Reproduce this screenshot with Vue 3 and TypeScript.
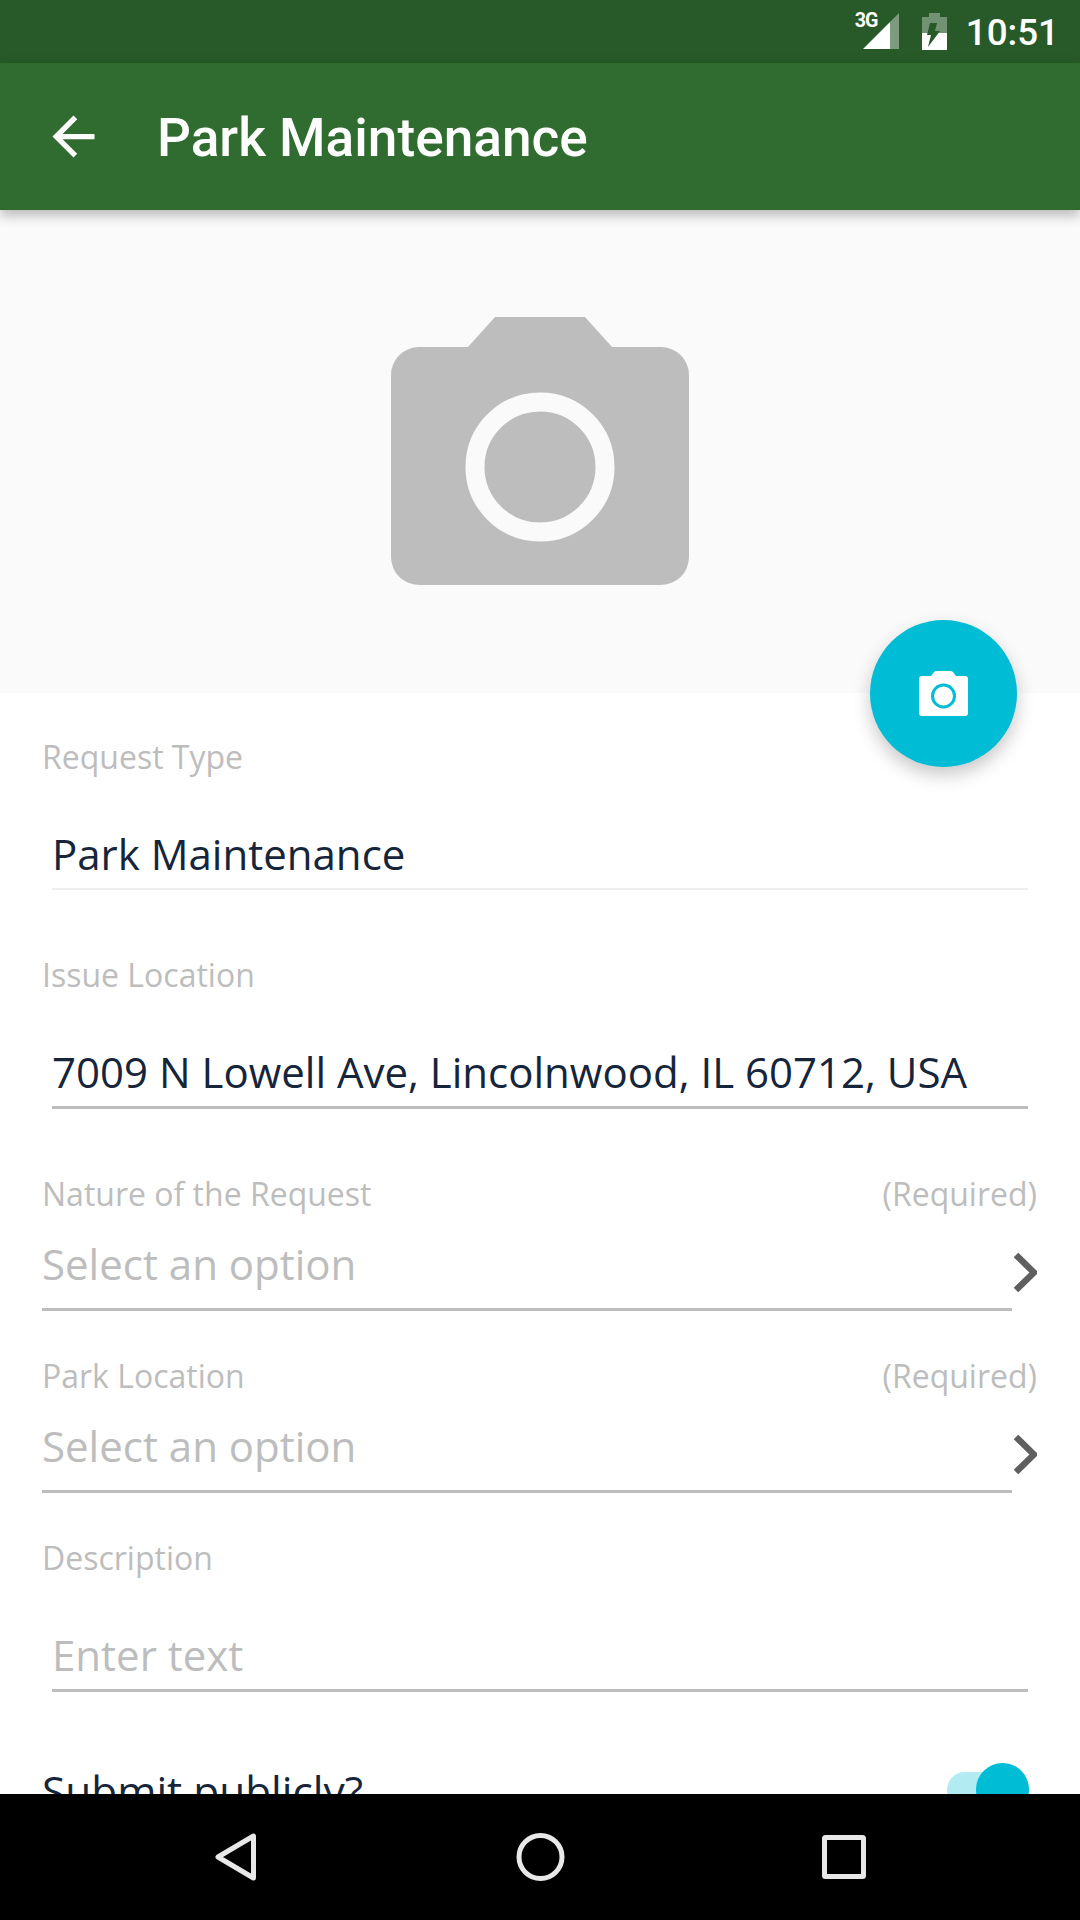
<script setup lang="ts">
interface Field {
  label: string
  value?: string
  placeholder?: string
  required?: boolean
  kind: 'readonly' | 'input' | 'select'
}

const fields: Field[] = [
  { label: 'Request Type', value: 'Park Maintenance', kind: 'readonly' },
  { label: 'Issue Location', value: '7009 N Lowell Ave, Lincolnwood, IL 60712, USA', kind: 'input' },
  { label: 'Nature of the Request', placeholder: 'Select an option', required: true, kind: 'select' },
  { label: 'Park Location', placeholder: 'Select an option', required: true, kind: 'select' },
  { label: 'Description', placeholder: 'Enter text', kind: 'input' }
]
</script>

<template>
  <div class="screen">
    <!-- Status bar -->
    <div class="status-bar">
      <div class="signal">
        <span class="network">3G</span>
        <svg width="36" height="36" viewBox="0 0 36 36">
          <path d="M36 0V36H27V9z" fill="#fff" opacity="0.4" />
          <path d="M27 9V36H0z" fill="#fff" />
        </svg>
      </div>
      <svg class="battery" width="25" height="37" viewBox="0 0 25 37">
        <path fill-rule="evenodd" d="M0 4H7V0H18V4H25V20H0zM8 10H15L13 18H18L16.5 20H5.5z" fill="#fff" opacity="0.35" />
        <path fill-rule="evenodd" d="M0 20H25V37H0zM5.5 20H16.5L6 34L9 22H5z" fill="#fff" />
      </svg>
      <span class="clock">10:51</span>
    </div>

    <!-- Toolbar -->
    <header class="toolbar">
      <svg class="back" width="63" height="63" viewBox="0 0 24 24">
        <path d="M20 11H7.83l5.59-5.59L12 4l-8 8 8 8 1.41-1.41L7.83 13H20z" fill="#fff" />
      </svg>
      <h1 class="title">Park Maintenance</h1>
    </header>

    <main class="content">
      <!-- Photo placeholder -->
      <section class="hero">
        <svg width="298" height="268" viewBox="0 0 298 268">
          <path
            fill="#bdbdbd"
            d="M77 30L104 0H194L221 30H270A28 28 0 0 1 298 58V240A28 28 0 0 1 270 268H28A28 28 0 0 1 0 240V58A28 28 0 0 1 28 30z"
          />
          <circle cx="149" cy="150" r="65" fill="none" stroke="#fafafa" stroke-width="19" />
        </svg>
        <button class="fab" type="button" aria-label="Add photo">
          <svg width="49" height="45" viewBox="0 0 49 45">
            <path
              fill="#fff"
              d="M12 5L15 1Q16 0 18 0H31Q33 0 34 1L37 5H46Q49 5 49 8V42Q49 45 46 45H3Q0 45 0 42V8Q0 5 3 5z"
            />
            <circle cx="24.5" cy="25" r="11" fill="none" stroke="#00bcd4" stroke-width="3" />
          </svg>
        </button>
      </section>

      <!-- Form -->
      <form class="form">
        <div v-for="field in fields" :key="field.label" class="field" :class="'field-' + field.kind">
          <div class="label-row">
            <span>{{ field.label }}</span>
            <span v-if="field.required">(Required)</span>
          </div>
          <div class="control">
            <div class="value" :class="{ placeholder: !field.value }">
              {{ field.value || field.placeholder }}
            </div>
            <svg v-if="field.kind === 'select'" class="chevron" width="24" height="39" viewBox="0 0 24 39">
              <path d="M3 2L21 19.5L3 37" fill="none" stroke="#5f5f5f" stroke-width="6.5" />
            </svg>
          </div>
        </div>

        <div class="toggle-row">
          <span>Submit publicly?</span>
          <span class="toggle"><span class="thumb"></span></span>
        </div>
      </form>
    </main>

    <!-- Navigation bar -->
    <nav class="nav-bar">
      <svg width="42" height="48" viewBox="0 0 42 48">
        <path d="M38.5 3V45L3 24z" fill="none" stroke="#e8e8e8" stroke-width="5" stroke-linejoin="round" />
      </svg>
      <svg width="49" height="48" viewBox="0 0 49 48">
        <circle cx="24.5" cy="24" r="21.5" fill="none" stroke="#e8e8e8" stroke-width="5" />
      </svg>
      <svg width="44" height="44" viewBox="0 0 44 44">
        <rect x="2.5" y="2.5" width="39" height="39" rx="1" fill="none" stroke="#e8e8e8" stroke-width="5" />
      </svg>
    </nav>
  </div>
</template>

<style scoped>
.screen {
  width: 1080px;
  height: 1920px;
  display: flex;
  flex-direction: column;
  overflow: hidden;
  background: #fff;
  font-family: "Open Sans", "Noto Sans", sans-serif;
}

.status-bar {
  height: 63px;
  flex: none;
  display: flex;
  align-items: center;
  padding-right: 21px;
  box-sizing: border-box;
  background: #275a28;
  color: #fff;
  font-family: Roboto, sans-serif;
}

.signal {
  position: relative;
  margin-left: auto;
  margin-top: -2px;
  height: 36px;
}

.network {
  position: absolute;
  left: -8px;
  top: -1px;
  font-size: 19.7px;
  line-height: 18px;
  font-weight: 700;
  letter-spacing: -1px;
}

.battery {
  margin-left: 23px;
  margin-top: -1px;
}

.clock {
  margin-left: 19px;
  margin-top: 2px;
  font-size: 36.75px;
  font-weight: 500;
}

.toolbar {
  position: relative;
  z-index: 2;
  height: 147px;
  flex: none;
  display: flex;
  align-items: center;
  padding-left: 42px;
  background: #306b30;
  box-shadow: 0 5px 12px rgba(0, 0, 0, 0.28);
}

.title {
  margin: 3px 0 0 52px;
  color: #fff;
  font-family: Roboto, sans-serif;
  font-size: 53.2px;
  font-weight: 500;
}

.content {
  flex: 1;
  min-height: 0;
  overflow: hidden;
}

.hero {
  position: relative;
  height: 483px;
  box-sizing: border-box;
  padding-top: 107px;
  display: flex;
  justify-content: center;
  align-items: flex-start;
  background: #fafafa;
}

.fab {
  position: absolute;
  right: 63px;
  bottom: -74px;
  width: 147px;
  height: 147px;
  padding: 0;
  border: 0;
  border-radius: 50%;
  display: flex;
  align-items: center;
  justify-content: center;
  background: #00bcd4;
  box-shadow: 0 8px 18px rgba(0, 0, 0, 0.22);
}

.form {
  padding: 42px 43px 0 42px;
}

.label-row {
  display: flex;
  justify-content: space-between;
  color: #bdbdbd;
  font-size: 32px;
  line-height: 44px;
}

.control {
  position: relative;
  border-bottom: 3px solid #bdbdbd;
  color: #16253a;
  font-size: 42px;
  line-height: 58px;
}

.field-readonly,
.field-input {
  padding-bottom: 63px;
}

.field-readonly .control,
.field-input .control {
  margin: 46px 9px 0 10px;
  padding-bottom: 5px;
}

.field-readonly .control {
  border-bottom: 2px solid #eee;
}

.field-select {
  padding-bottom: 43px;
}

.field-select .control {
  margin-right: 25px;
  padding: 19px 0 15px;
}

.field-input:last-of-type {
  padding-bottom: 0;
}

.placeholder {
  color: #bdbdbd;
}

.chevron {
  position: absolute;
  right: -25px;
  top: 37px;
}

.toggle-row {
  display: flex;
  justify-content: space-between;
  align-items: center;
  margin-top: 5px;
  height: 60px;
  padding-right: 8px;
  color: #16253a;
  font-size: 42.4px;
}

.toggle {
  position: relative;
  width: 82px;
  height: 36px;
  border-radius: 18px;
  background: #b2ebf2;
}

.thumb {
  position: absolute;
  right: 0;
  top: -9px;
  width: 53px;
  height: 53px;
  border-radius: 50%;
  background: #00bcd4;
}

.nav-bar {
  position: relative;
  z-index: 2;
  height: 126px;
  flex: none;
  background: #000;
}

.nav-bar svg {
  position: absolute;
  top: 39px;
}

.nav-bar svg:nth-child(1) {
  left: 215px;
}

.nav-bar svg:nth-child(2) {
  left: 516px;
}

.nav-bar svg:nth-child(3) {
  left: 822px;
  top: 41px;
}
</style>
